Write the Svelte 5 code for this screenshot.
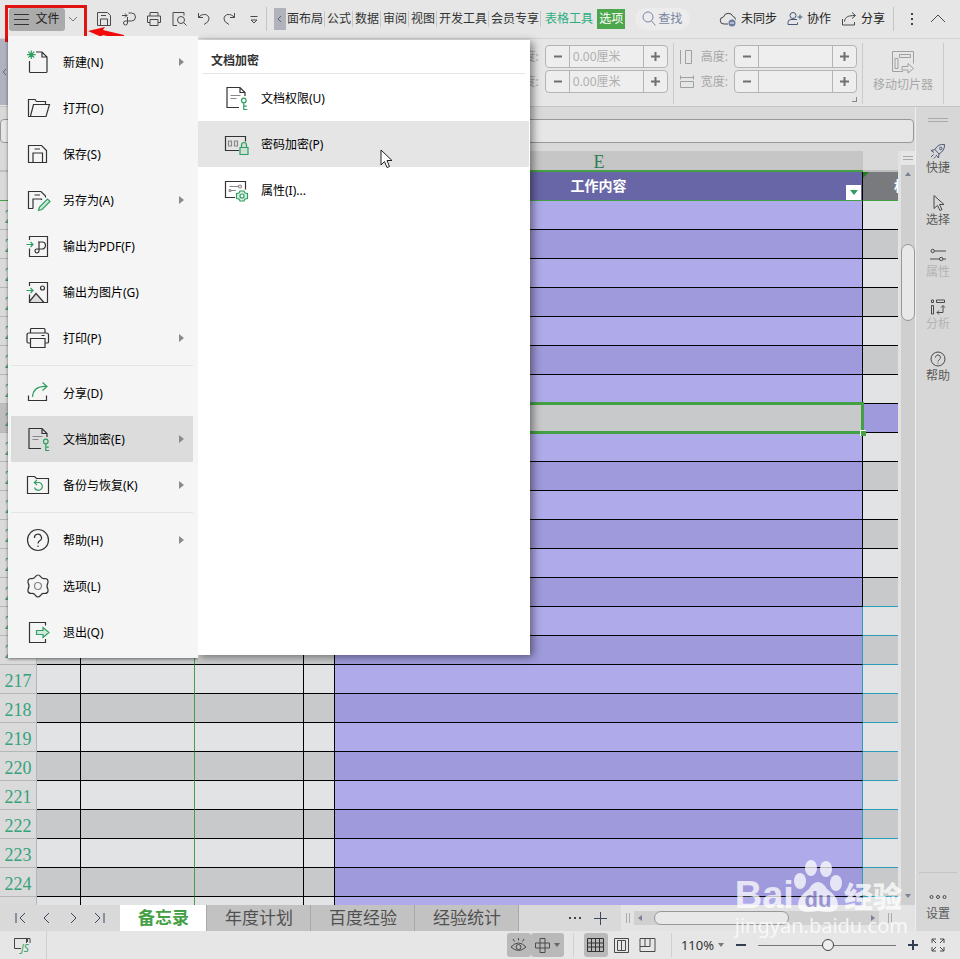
<script lang="ts">
	const dark = '#333';
	const green = '#2f9e62';
	const grey = '#888';

	// Every icon is a list of [path, stroke, fill] on a 24x24 grid
	const page = 'M15 21.5H3v-20h13l5 5V10M16 1.5v5h5';
	const key = 'M17.5 14.5a2.3 2.3 0 1 0 4.6 0a2.3 2.3 0 1 0-4.6 0M19.8 17v6.5h3.5M19.8 20.2h3';
	const icons = {
		new: [
			['M3.5 11v10.500q0 1 1 1h15.500q1 0 1-1V7l-5-5h-6M16 2v5h5', dark],
			['M5.300 .5v8.500M1 4.700h8.600M2.300 1.700l6 6M8.300 1.700l-6 6', green]
		],
		open: [['M19.500 8.500V5.500H10.500L9 3.500H2.500v17h17.500L23.500 8.500H7.500L4.500 20', dark]],
		save: [['M2.500 3.500h13l5 5v12h-18zM7 20.500v-9.500h9.500v9.500M8.500 7h5.500', dark]],
		saveAs: [
			['M7 20.500H2.500v-17h12.500l4.500 4.500v1.500M7 20.500v-9.500h8.500v1M8.500 7h5.500', dark],
			['M12.500 22.500l1-3.500 8-8 2.500 2.500-8 8z', green, '#cfe9da']
		],
		pdf: [
			['M3.500 6v-3.500h18v20h-18v-8M12 8h4a3.500 3.500 0 0 1 0 7h-5.500a2 2 0 1 0 2.500 2v-9', dark],
			['M.5 10.500h6.500M4.500 8l2.500 2.500-2.500 2.500', green]
		],
		image: [
			['M3.500 21.500l6.500-8 8 9h-14z', dark, '#ddd'],
			['M3.500 6v-3.500h18v20h-18v-8M14.500 8a2 2 0 1 0 4 0a2 2 0 1 0-4 0', dark],
			['M.5 10.500h6.500M4.500 8l2.500 2.500-2.500 2.500', green]
		],
		print: [
			['M4.500 7V3.500q0-1 1-1h12.500q1 0 1 1V7M4.500 17H2.500q-1 0-1.500-1V9q0-2 2-2h17.500q2 0 2 2v7q0 1-1 1H19M4.500 12.500H19v9H4.500zM15.500 9.500h3', dark]
		],
		share: [
			['M2.500 14.500v5h18v-5', dark],
			['M6.500 16C7 9 11 5 20.500 5.500M16.500 1.500l4.500 4-4.500 4', green]
		],
		encrypt: [[page, dark], ['M6.500 9.500h10M6.500 12.500h6', grey], [key, green]],
		backup: [
			['M1.500 19.500V3.500h7l2 2h12v15h-21z', dark],
			['M8.500 9.500h5a4 4 0 1 1-5 5M11 6.800L8.300 9.500l2.700 2.500', green]
		],
		help: [['M1.500 12a10.500 10.500 0 1 0 21 0a10.500 10.500 0 1 0-21 0M8.500 10a3.500 3.500 0 1 1 5.500 2.500q-2 1.200-2 3M12 17.500v1.500', dark]],
		gear: [
			['M9.500 2.500Q12-.5 14.500 2.500Q16 5 18.500 4.500Q22.500 4.500 22 8.500Q20 12 22 15.500Q22.500 19.500 18.500 19.500Q16 19 14.500 21.500Q12 24.500 9.500 21.500Q8 19 5.500 19.500Q1.500 19.500 2 15.500Q4 12 2 8.500Q1.500 4.500 5.500 4.500Q8 5 9.500 2.500z', dark],
			['M8.500 12a3.500 3.500 0 1 0 7 0a3.500 3.500 0 1 0-7 0', grey]
		],
		exit: [
			['M19.500 5.500V2.500h-16v20h16V19', dark],
			['M10.500 10.500h6.500v-3l6 5-6 5v-3h-6.500z', green, '#cfe9da']
		],
		password: [
			['M15 18.500H1.500v-14h20v5', dark],
			['M4.500 9h3v5h-3zM10.500 9h3v5h-3z', grey],
			['M16 15.500h8v7h-8zM17.500 15.500v-2.500a2.500 2.500 0 0 1 5 0v2.500', green, '#cfe0d5']
		],
		property: [
			['M11 19.500H1.500v-16h20v8', dark],
			['M5.500 8.500h9M14.500 8.500a1.500 1.500 0 1 0 3 0a1.500 1.500 0 1 0-3 0M5 12.500a1 1 0 1 0 2 0a1 1 0 1 0-2 0M7 12.500h5', grey],
			['M16 13h4l1 2 2.500.5v5l-2.500.5-1 2h-4l-1-2-2.500-.5v-5l2.500-.5zM16 18a2 2 0 1 0 4 0a2 2 0 1 0-4 0', green, '#d8eee1']
		]
	};

	const menu = [
		[
			{ label: '新建(N)', icon: 'new', more: true },
			{ label: '打开(O)', icon: 'open' },
			{ label: '保存(S)', icon: 'save' },
			{ label: '另存为(A)', icon: 'saveAs', more: true },
			{ label: '输出为PDF(F)', icon: 'pdf' },
			{ label: '输出为图片(G)', icon: 'image' },
			{ label: '打印(P)', icon: 'print', more: true }
		],
		[
			{ label: '分享(D)', icon: 'share' },
			{ label: '文档加密(E)', icon: 'encrypt', more: true },
			{ label: '备份与恢复(K)', icon: 'backup', more: true }
		],
		[
			{ label: '帮助(H)', icon: 'help', more: true },
			{ label: '选项(L)', icon: 'gear' },
			{ label: '退出(Q)', icon: 'exit' }
		]
	];
	const submenu = [
		{ label: '文档权限(U)', icon: 'encrypt' },
		{ label: '密码加密(P)', icon: 'password' },
		{ label: '属性(I)...', icon: 'property' }
	];

	const quick = [
		{ name: '保存', d: 'M1.500 1.500h10l3 3v10h-13zM4.500 14.500v-6.500h7v6.500M5 4.500h5' },
		{ name: '输出为PDF', d: 'M1 4.500h5M4 2.500l2 2-2 2M7.500 2h3a4 4 0 0 1 0 8h-6a2 2 0 1 0 2 2V6' },
		{ name: '打印', d: 'M4 5V1.500h8V5M4 11.500H1.500V5h13v6.500H12M4 8.500h8v6H4z' },
		{ name: '打印预览', d: 'M6 14.500H2v-13h11v3M6.500 9a3.500 3.500 0 1 0 7 0a3.500 3.500 0 1 0-7 0M12.500 11.500l3 3' },
		{ name: '撤销', d: 'M2.500 2v4.500h4.500M2.500 6.500C6 2 13 2.500 13 8q0 3-5 5.500' },
		{ name: '恢复', d: 'M13.500 2v4.500H9M13.500 6.500C10 2 3 2.500 3 8q0 3 5 5.500' },
		{ name: '更多', d: 'M4.500 5.500h7M5 9l3 3 3-3z' }
	];
	const tabs = ['面布局', '公式', '数据', '审阅', '视图', '开发工具', '会员专享'];

	const side = [
		{ label: '快捷', d: 'M15.500 2.500Q9 1.500 6 7.500L10 12Q16 8.500 15.500 2.500zM10.500 6.500a1.300 1.300 0 1 0 2.600 0a1.300 1.300 0 1 0-2.600 0M6 7.500L2 8.500l3 2M10 12l-.5 4-2.500-3M4.500 12.500L2 15M6.500 14.500L5 16.500', color: '#4a5878' },
		{ label: '选择', d: 'M5 1.500v13l3.500-3 2.500 5 2-1-2.500-5h4.500z' },
		{ label: '属性', d: 'M2 5a1.700 1.700 0 1 0 3.400 0a1.700 1.700 0 1 0-3.400 0M5.500 5H17M10.500 13a1.700 1.700 0 1 0 3.400 0a1.700 1.700 0 1 0-3.400 0M1 13h9.500M14 13h3', off: true },
		{ label: '分析', d: 'M2.500 2h2v2.500h-2zM7.500 2h8v2.500h-8zM2.500 7.500h2v8.500h-2zM8 14.500h6V8M10 12.500l-2 2 2 2M12 9.500l2-2 2 2', off: true },
		{ label: '帮助', d: 'M2 9a7 7 0 1 0 14 0a7 7 0 1 0-14 0M6.500 7.500a2.500 2.500 0 1 1 4 2q-1.500 1-1.500 2M9 12.700v1' }
	];

	const rows = Array.from({ length: 24 }, (_, i) => 201 + i);
	const nav = [
		{ name: '第一张', d: 'M3 3v10M12 3L7 8l5 5' },
		{ name: '上一张', d: 'M10 3L5 8l5 5' },
		{ name: '下一张', d: 'M6 3l5 5-5 5' },
		{ name: '最后一张', d: 'M4 3l5 5-5 5M13 3v10' }
	];
	const sheets = ['备忘录', '年度计划', '百度经验', '经验统计'];

	let openItem = $state('文档加密(E)');
	let hovered = $state('密码加密(P)');
	let activeSheet = $state('备忘录');
	let zoom = $state(51);
</script>

{#snippet line(d, size = 16, color = '#4a4a4a')}
	<svg width={size} height={size} viewBox="0 0 {size} {size}" fill="none" stroke={color}><path {d} /></svg>
{/snippet}

{#snippet menuIcon(name)}
	<svg width="24" height="24" viewBox="0 0 24 24" stroke-width="1.2">
		{#each icons[name] as [d, stroke, fill]}
			<path {d} {stroke} fill={fill ?? 'none'} />
		{/each}
	</svg>
{/snippet}

{#snippet spinner(label, value)}
	<div class="spinner">
		<button aria-label="减小{label}">{@render line('M2 5.500h8', 11, '#707070')}</button>
		<input type="text" aria-label={label} {value} />
		<button aria-label="增大{label}">{@render line('M1 5.500h9M5.500 1v9', 11, '#707070')}</button>
	</div>
{/snippet}

<div class="app">
	<header class="topbar">
		<button class="file-button">
			{@render line('M0 3.500h15M0 8.500h15M0 13.500h15', 16, '#333')}文件
		</button>
		<button class="file-more" aria-label="文件菜单">{@render line('M1 3l4 4 4-4', 10, '#777')}</button>
		<div class="quick">
			{#each quick as item}
				<button aria-label={item.name}>{@render line(item.d)}</button>
			{/each}
		</div>
		<span class="rule"></span>
		<button class="tab-scroll" aria-label="向左滚动">{@render line('M5 1L2 4l3 3', 8, '#666')}</button>
		<nav class="tabs">
			{#each tabs as tab}
				<a href="#tab">{tab}</a>
			{/each}
		</nav>
		<a class="tool-tab" href="#table">表格工具</a>
		<a class="tool-tab option" href="#option">选项</a>
		<button class="search">{@render line('M2 6a5 5 0 1 0 10 0a5 5 0 1 0-10 0M10.500 10l4 4.500', 16, '#7a86a8')}查找</button>
		<div class="account">
			<button>
				<svg width="18" height="16" viewBox="0 0 18 16" fill="none" stroke="#444">
					<path d="M9 13H5a3.500 3.500 0 0 1-.5-7A5 5 0 0 1 14 5.500q2.500.5 2.500 3" />
					<circle cx="13" cy="12" r="3.500" fill="#6c7ba0" stroke="none" />
					<path d="M11 12h4" stroke="#fff" />
				</svg>未同步
			</button>
			<button>{@render line('M3 4.500a3 3 0 1 0 6 0a3 3 0 1 0-6 0M10 8.500H4q-3 0-3 3v2h9.500v-2M10.500 6h5M13 3.500v5', 16, '#4a5878')}协作</button>
			<button>{@render line('M1.500 8v6h12v-3M3.500 10.500C4 6 7 4.500 14 4.500M11 1.500l3.500 3-3.500 3')}分享</button>
		</div>
		<span class="rule"></span>
		<button class="dots" aria-label="更多">
			<svg width="4" height="14" viewBox="0 0 4 14" fill="#444"><path d="M1 1h2v2H1zM1 6h2v2H1zM1 11h2v2H1z" /></svg>
		</button>
		<button class="collapse" aria-label="收起功能区">{@render line('M1 11l7-7 7 7')}</button>

		<!-- red callout round the file button -->
		<div class="callout"></div>
		<svg class="callout-arrow" width="36" height="12" viewBox="0 0 36 12" fill="#f00c0c">
			<path d="M0 4L17 0l-2 3L36 8v4L14 8l2 3z" />
		</svg>
	</header>

	<section class="ribbon">
		<button class="ribbon-scroll" aria-label="向左滚动">{@render line('M6 1L3 4l3 3', 8, '#666')}</button>
		<div class="size-group">
			<div class="size-row"><span>高度:</span>{@render spinner('按钮高度', '0.00厘米')}</div>
			<div class="size-row"><span>宽度:</span>{@render spinner('按钮宽度', '0.00厘米')}</div>
		</div>
		<div class="size-group">
			<div class="size-row">{@render line('M1.500 1v14M6.500 1.500h6v13h-6z', 16, '#a0a0a0')}<span>高度:</span>{@render spinner('高度', '')}</div>
			<div class="size-row">{@render line('M1.500 3.500h13M1.500 1.500v4M14.500 1.500v4M1.500 7.500h13v6h-13z', 16, '#a0a0a0')}<span>宽度:</span>{@render spinner('宽度', '')}</div>
			<button class="launcher" aria-label="更多设置"></button>
		</div>
		<button class="slicer">
			<svg width="24" height="24" viewBox="0 0 24 24" fill="none" stroke="#a0a0a0">
				<path d="M12 21.500H1.500v-20h21v12M8.500 4.500h11v3h-11zM4 8.500h3v10H4zM11 16.500h6v-3l5.500 5-5.500 4.500v-3h-6z" />
			</svg>
			移动切片器
		</button>
	</section>

	<main>
		<div class="work">
			<div class="formula"><input type="text" aria-label="编辑栏" /></div>
			<div class="sheet">
				<table>
					<colgroup>
						<col class="w-num" /><col class="w-a" /><col class="w-b" /><col class="w-c" /><col class="w-d" /><col /><col class="w-f" />
					</colgroup>
					<thead>
						<tr class="letters">
							<th></th><th></th><th></th><th></th><th></th>
							<th class="letter-e">E</th>
							<th></th>
						</tr>
						<tr class="titles">
							<th></th><th></th><th></th><th></th><th></th>
							<th class="title-e">
								工作内容
								<button class="filter" aria-label="筛选">
									<svg width="8" height="5" viewBox="0 0 8 5" fill="#2f9e62"><path d="M0 0h8L4 5z" /></svg>
								</button>
							</th>
							<th class="title-f">相关</th>
						</tr>
					</thead>
					<tbody>
						{#each rows as row, i}
							<tr class:current={row === 208}>
								<th class="num">{row}</th>
								<td></td>
								<td class="freeze"></td>
								<td></td>
								<td></td>
								<td class="e" class:selected={row === 208} class:cyan-side={i > 13}></td>
								<td class="f" class:cyan-line={i > 12}></td>
							</tr>
						{/each}
						<tr class="partial">
							<th class="num"></th>
							<td></td>
							<td class="freeze"></td>
							<td></td>
							<td></td>
							<td class="e cyan-side"></td>
							<td class="f"></td>
						</tr>
					</tbody>
				</table>
				<div class="vscroll">
					<div class="split"></div>
					<button aria-label="向上滚动"><svg width="6" height="4" viewBox="0 0 6 4" fill="#7c8296"><path d="M0 4h6L3 0z" /></svg></button>
					<div class="vtrack"><div class="vthumb"></div></div>
					<button aria-label="向下滚动"><svg width="6" height="4" viewBox="0 0 6 4" fill="#7c8296"><path d="M0 0h6L3 4z" /></svg></button>
				</div>
			</div>
			<div class="sheet-bar">
				<div class="nav">
					{#each nav as item}
						<button aria-label={item.name}>{@render line(item.d, 16, '#3f4660')}</button>
					{/each}
				</div>
				{#each sheets as sheet}
					<button class="sheet-tab" class:active={sheet === activeSheet} onclick={() => (activeSheet = sheet)}>{sheet}</button>
				{/each}
				<div class="sheet-extra">
					<button aria-label="更多工作表">
						<svg width="14" height="4" viewBox="0 0 14 4" fill="#444"><path d="M1 1h2v2H1zM6 1h2v2H6zM11 1h2v2h-2z" /></svg>
					</button>
					<button aria-label="新建工作表">{@render line('M1 7.500h13M7.500 1v13', 15, '#3f4660')}</button>
				</div>
				<div class="hscroll">
					<span class="grip"></span>
					<div class="htrack">
						<button aria-label="向左滚动"><svg width="4" height="6" viewBox="0 0 4 6" fill="#7c8296"><path d="M4 0v6L0 3z" /></svg></button>
						<div class="hthumb"></div>
						<button aria-label="向右滚动"><svg width="4" height="6" viewBox="0 0 4 6" fill="#7c8296"><path d="M0 0v6l4-3z" /></svg></button>
					</div>
					<span class="grip"></span>
				</div>
			</div>
		</div>
		<aside>
			<span class="handle"></span>
			{#each side as item}
				<button class:off={item.off}>{@render line(item.d, 18, item.color)}{item.label}</button>
			{/each}
			<div class="settings">
				<button>{@render line('M1 9a1.500 1.500 0 1 0 3 0a1.500 1.500 0 1 0-3 0M7.500 9a1.500 1.500 0 1 0 3 0a1.500 1.500 0 1 0-3 0M14 9a1.500 1.500 0 1 0 3 0a1.500 1.500 0 1 0-3 0', 18)}设置</button>
			</div>
		</aside>
	</main>

	<footer>
		<button class="script" aria-label="JS宏">
			<svg width="18" height="18" viewBox="0 0 18 18" fill="none" stroke="#444">
				<path d="M7 12.500H.5v-10h13V6M12.500 7V2.500h3.500V7" />
				<text x="7" y="16" font-size="10" font-style="italic" fill="#2f9e62" stroke="none">JS</text>
			</svg>
		</button>
		<div class="toggles">
			<button aria-label="护眼模式">{@render line('M1 10q7.500-8 15 0q-7.500 7-15 0zM6 10a2.500 2.500 0 1 0 5 0a2.500 2.500 0 1 0-5 0M8.500 1v2.500M3 2l1.500 2.500M14 2l-1.500 2.500', 17)}</button>
			<button class="wide" aria-label="阅读模式">
				{@render line('M6 1.500h5v14H6zM1.500 6h14v5h-14z', 17)}
				<svg width="6" height="4" viewBox="0 0 6 4" fill="#666"><path d="M0 0h6L3 4z" /></svg>
			</button>
		</div>
		<div class="views">
			<button class="on" aria-label="普通视图">{@render line('M.5 1.500h16v13H.5zM.5 6h16M.5 10h16M4.500 1.500v13M8.500 1.500v13M12.500 1.500v13', 17, '#333')}</button>
			<button aria-label="页面布局">{@render line('M1.500 1.500h14v14h-14zM4.500 3.500h4v10h-4zM8.500 3.500h4v10h-4z', 17)}</button>
			<button aria-label="分页预览">{@render line('M1 1.500h15v13H1zM6 1.500v8M11 1.500v8M1 9.500h10', 17)}</button>
		</div>
		<div class="zoom">
			<button class="percent">110%<svg width="6" height="4" viewBox="0 0 6 4" fill="#777"><path d="M0 0h6L3 4z" /></svg></button>
			<button class="bold-sign" aria-label="缩小">{@render line('M1 6h10', 12, '#333e55')}</button>
			<input type="range" min="0" max="100" aria-label="缩放" bind:value={zoom} />
			<button class="bold-sign" aria-label="放大">{@render line('M1 6h10M6 1v10', 12, '#333e55')}</button>
			<button aria-label="全屏">{@render line('M2 6V2h4M2 2l4 4M10 2h4v4M14 2l-4 4M2 10v4h4M2 14l4-4M14 10v4h-4M14 14l-4-4')}</button>
		</div>
	</footer>

	<div class="watermark">
		<div class="brand">
			<b>Bai</b>
			<svg width="48" height="56" viewBox="0 0 48 56" fill="#fff">
				<ellipse cx="6" cy="22" rx="6" ry="8" />
				<ellipse cx="17" cy="9" rx="6" ry="8" />
				<ellipse cx="32" cy="10" rx="6" ry="8" />
				<ellipse cx="42" cy="24" rx="6" ry="8" />
				<path d="M24 23q5 0 9 7q11 8 11 15q0 8-9 8q-6 0-11-1q-5 1-11 1q-9 0-9-8q0-7 11-15q4-7 9-7z" />
				<text x="24" y="48" text-anchor="middle" font-size="22" font-weight="bold" fill="#8f8bc8">du</text>
			</svg>
			<b class="cn">经验</b>
		</div>
		<span>jingyan.baidu.com</span>
	</div>

	<div class="submenu">
		<h2>文档加密</h2>
		{#each submenu as item}
			<button class:hovered={item.label === hovered} onmouseenter={() => (hovered = item.label)}>
				{@render menuIcon(item.icon)}<span>{item.label}</span>
			</button>
		{/each}
	</div>
	<div class="menu">
		{#each menu as group, i}
			{#if i > 0}<hr />{/if}
			{#each group as item}
				<button class:open={item.label === openItem} onclick={() => (openItem = item.label)}>
					{@render menuIcon(item.icon)}<span>{item.label}</span>
					{#if item.more}
						<svg width="5" height="8" viewBox="0 0 5 8" fill="#8a8a8a"><path d="M0 0v8l5-4z" /></svg>
					{/if}
				</button>
			{/each}
		{/each}
	</div>
	<svg class="pointer" width="13" height="20" viewBox="0 0 13 20" fill="#fff" stroke="#222">
		<path d="M1 1v15l3.500-3.500L7 18.500l2.500-1L7 11.500h5z" />
	</svg>
</div>

<style>
	:global(body) {
		margin: 0;
	}

	.app {
		position: relative;
		overflow: hidden;
		background: #e6e6e6;
		color: #333;
		font-family: 'Noto Sans', 'Noto Sans CJK SC', sans-serif;
		font-size: 12px;
		line-height: 16px;
	}

	button,
	input {
		font: inherit;
		color: inherit;
		box-sizing: border-box;
	}

	button {
		display: flex;
		align-items: center;
		justify-content: center;
		padding: 0;
		border: 0;
		background: none;
		white-space: nowrap;
	}

	svg {
		flex: none;
		overflow: visible;
	}

	a {
		color: inherit;
		text-decoration: none;
		white-space: nowrap;
	}

	/* Title bar */

	.topbar {
		position: relative;
		display: flex;
		align-items: center;
		height: 38px;
		padding-left: 9px;
		border-bottom: 1px solid #d2d2d2;
	}

	.file-button {
		width: 56px;
		height: 23px;
		gap: 5px;
		background: #ababab;
		border-radius: 3px;
		color: #222;
	}

	.file-more {
		width: 16px;
		height: 23px;
		margin-right: 10px;
	}

	.quick {
		display: flex;
	}

	.quick button {
		width: 25px;
		height: 24px;
	}

	.rule {
		width: 1px;
		height: 24px;
		background: #c4c4c4;
	}

	.tab-scroll {
		width: 12px;
		height: 22px;
		margin-left: 7px;
		background: #b0b3bb;
	}

	.tabs {
		display: flex;
	}

	.tabs a {
		padding: 0 1px 0 2px;
		border-right: 1px solid #c8c8c8;
	}

	.tabs a:first-child {
		padding-left: 1px;
	}

	.tool-tab {
		margin-left: 4px;
		color: #2fae80;
	}

	.option {
		padding: 2px;
		background: #4ca64c;
		color: #fff;
	}

	.search {
		gap: 1px;
		margin-left: 10px;
		padding: 3px 8px 3px 6px;
		border-radius: 12px;
		background: #ececec;
		color: #7a84a0;
	}

	.account {
		display: flex;
		gap: 10px;
		margin: 0 8px 0 auto;
		color: #222;
	}

	.account button {
		gap: 4px;
	}

	.dots {
		width: 35px;
	}

	.collapse {
		width: 18px;
		margin-right: 13px;
	}

	.callout {
		position: absolute;
		left: 5px;
		top: 5px;
		width: 76px;
		height: 31px;
		border: 3px solid #e01212;
	}

	.callout-arrow {
		position: absolute;
		left: 88px;
		top: 27px;
	}

	/* Ribbon */

	.ribbon {
		display: flex;
		justify-content: flex-end;
		height: 61px;
		padding: 4px 16px 2px 0;
		border-bottom: 1px solid #c4c4c4;
		color: #a8a8a8;
	}

	.ribbon-scroll {
		width: 8px;
		height: 66px;
		margin: -4px auto 0 0;
		background: #b0b3bf;
	}

	.size-group {
		position: relative;
		display: flex;
		flex-direction: column;
		gap: 2px;
		padding: 2px 5px 0;
		border-right: 1px solid #cacaca;
	}

	.size-row {
		display: flex;
		align-items: center;
		gap: 6px;
	}

	.spinner {
		display: flex;
		width: 123px;
		height: 23px;
		box-sizing: border-box;
		border: 1px solid #b4b4b4;
		border-radius: 4px;
		background: #eee;
	}

	.spinner button {
		width: 23px;
		stroke-width: 2;
	}

	.spinner input {
		flex: 1;
		min-width: 0;
		padding: 0 3px;
		border: solid #b4b4b4;
		border-width: 0 1px;
		background: none;
		color: #b0b0b0;
	}

	.launcher {
		position: absolute;
		right: 5px;
		bottom: 2px;
		width: 5px;
		height: 5px;
		border: solid #888;
		border-width: 0 1px 1px 0;
	}

	.slicer {
		flex-direction: column;
		gap: 3px;
		padding: 0 10px 4px;
		border-right: 1px solid #cacaca;
	}

	/* Work area */

	main {
		display: flex;
	}

	.work {
		flex: 1;
		min-width: 0;
		background: #d9d9d9;
	}

	.formula {
		padding: 12px 1px 8px 0;
	}

	.formula input {
		display: block;
		width: 100%;
		height: 24px;
		border: 1px solid #979797;
		border-radius: 4px;
		background: #e6e6e6;
	}

	.sheet {
		display: flex;
	}

	table {
		flex: 1;
		width: 0;
		table-layout: fixed;
		border-spacing: 0;
	}

	.w-num {
		width: 37px;
	}

	.w-a {
		width: 44px;
	}

	.w-b {
		width: 114px;
	}

	.w-c {
		width: 109px;
	}

	.w-d {
		width: 31px;
	}

	.w-f {
		width: 35px;
	}

	th,
	td {
		box-sizing: border-box;
		height: 29px;
		padding: 0;
		border: solid #000;
		border-width: 0 1px 1px 0;
	}

	.letters th {
		height: 21px;
		border-width: 0 0 2px;
		border-color: #bdbdbd;
	}

	.letters .letter-e {
		padding-top: 3px;
		border-color: #44a044;
		background: #c6c6c6;
		color: #2f7d52;
		font: 18px 'Liberation Serif', serif;
		line-height: 16px;
	}

	.titles th {
		border-bottom-color: #44a044;
	}

	.titles .title-e {
		position: relative;
		background: #6866a6;
		color: #fff;
		font-size: 14px;
	}

	.filter {
		position: absolute;
		right: 1px;
		bottom: 0;
		width: 15px;
		height: 15px;
		background: #fff;
	}

	.titles .title-f {
		position: relative;
		overflow: hidden;
		padding-left: 31px;
		border-right: 0;
		background: #787a7e;
		color: #fff;
		font-size: 14px;
		text-align: left;
		white-space: nowrap;
	}

	.title-f::before {
		content: '';
		position: absolute;
		left: 0;
		top: 0;
		width: 6px;
		height: 6px;
		background: #1e7d1e;
		clip-path: polygon(0 0, 100% 0, 0 100%);
	}

	tbody tr {
		background: #e2e3e5;
	}

	tbody tr:nth-child(even) {
		background: #c8c9ca;
	}

	.num {
		padding-top: 4px;
		border-color: #b4b6b8;
		background: #dadada;
		color: #36a37c;
		font: 18px 'Liberation Serif', serif;
		line-height: 18px;
	}

	.current .num {
		background: #bebebe;
	}

	.freeze {
		border-right-color: #44a044;
	}

	.e,
	.current .f {
		background: #afabea;
	}

	tr:nth-child(even) .e,
	.current .f {
		background: #9e9adb;
	}

	.f {
		border-right: 0;
	}

	.e.cyan-side {
		border-right-color: #2a9db8;
	}

	.cyan-line {
		border-bottom-color: #2a9db8;
	}

	tr .e.selected {
		position: relative;
		background: #c8c9ca;
	}

	.selected::before {
		content: '';
		position: absolute;
		inset: -2px;
		border: 3px solid #44a044;
	}

	.selected::after {
		content: '';
		position: absolute;
		right: -4px;
		bottom: -4px;
		width: 5px;
		height: 5px;
		border: solid #fff;
		border-width: 1px 0 0 1px;
		background: #44a044;
	}

	.partial td,
	.partial .num {
		height: 8px;
		padding: 0;
		border-bottom: 0;
		line-height: 0;
	}

	.vscroll {
		display: flex;
		flex-direction: column;
		width: 14px;
		border-left: 3px solid #e2e2e2;
		background: #cfcfcf;
	}

	.vscroll button {
		height: 18px;
	}

	.split {
		height: 14px;
		background:
			linear-gradient(#a8a8a8, #a8a8a8) 2px 5px / 10px 1px no-repeat,
			linear-gradient(#a8a8a8, #a8a8a8) 2px 8px / 10px 1px no-repeat,
			#e6e6e6;
	}

	.vtrack {
		flex: 1;
		padding-top: 61px;
	}

	.vthumb {
		width: 14px;
		height: 77px;
		box-sizing: border-box;
		border: 1px solid #979797;
		border-radius: 7px;
		background: #e8e8e8;
	}

	/* Sheet tabs */

	.sheet-bar {
		display: flex;
		height: 26px;
	}

	.nav {
		display: flex;
		gap: 10px;
		width: 107px;
		padding-left: 13px;
	}

	.sheet-tab {
		width: 104px;
		padding-left: 1px;
		border-right: 1px solid #a9a9a9;
		background: #c2c2c2;
		color: #505050;
		font-size: 17px;
	}

	.sheet-tab.active {
		width: 87px;
		background: #fff;
		color: #44a044;
		font-weight: bold;
	}

	.sheet-extra {
		display: flex;
		flex: 1;
		justify-content: flex-end;
		gap: 11px;
		padding-right: 13px;
	}

	.hscroll {
		display: flex;
		align-items: center;
		gap: 4px;
		width: 294px;
		padding-left: 5px;
		box-sizing: border-box;
		background: #e3e3e3;
	}

	.grip {
		width: 2px;
		height: 10px;
		border: solid #aaa;
		border-width: 0 1px;
	}

	.htrack {
		display: flex;
		align-items: center;
		width: 245px;
		height: 14px;
		margin-right: 5px;
		background: #d0d0d0;
	}

	.htrack button {
		width: 12px;
		height: 14px;
	}

	.hthumb {
		width: 135px;
		height: 14px;
		margin: 0 auto 0 8px;
		box-sizing: border-box;
		border: 1px solid #979797;
		border-radius: 7px;
		background: #e8e8e8;
	}

	/* Side pane */

	aside {
		display: flex;
		flex-direction: column;
		align-items: center;
		width: 44px;
		border-left: 1px solid #eee;
		background: #d7d7d7;
		color: #5a5a5a;
	}

	.handle {
		width: 20px;
		height: 2px;
		margin: 11px 0 20px;
		border: solid #aaa;
		border-width: 1px 0;
	}

	aside button {
		flex-direction: column;
		height: 34px;
		margin-bottom: 18px;
	}

	aside .off {
		color: #b4b4b4;
	}

	.settings {
		width: 38px;
		margin-top: auto;
		padding-top: 15px;
		border-top: 1px solid #c4c4c4;
	}

	.settings button {
		width: 100%;
		margin-bottom: 9px;
	}

	/* Status bar */

	footer {
		display: flex;
		align-items: center;
		height: 28px;
	}

	.script {
		width: 47px;
		height: 28px;
		border-right: 1px solid #d0d0d0;
	}

	.toggles {
		display: flex;
		margin-left: auto;
		padding-right: 9px;
		border-right: 1px solid #d0d0d0;
	}

	.toggles button {
		width: 24px;
		height: 24px;
		border-radius: 3px;
		background: #b9b9b9;
	}

	.toggles .wide {
		width: 33px;
		gap: 3px;
	}

	.views {
		display: flex;
		gap: 2px;
		padding: 0 11px 0 10px;
		border-right: 1px solid #d0d0d0;
	}

	.views button {
		width: 24px;
		height: 24px;
		border-radius: 3px;
	}

	.views .on {
		background: #b9b9b9;
	}

	.zoom {
		display: flex;
		align-items: center;
		gap: 11px;
		padding: 0 14px 0 9px;
	}

	.percent {
		gap: 4px;
		font-size: 13px;
	}

	.bold-sign {
		stroke-width: 2;
	}

	.zoom input {
		width: 138px;
		height: 14px;
		margin: 0;
		appearance: none;
		background: linear-gradient(#777, #777) center / 100% 1px no-repeat;
	}

	.zoom input::-webkit-slider-thumb {
		appearance: none;
		width: 12px;
		height: 12px;
		box-sizing: border-box;
		border: 1px solid #444;
		border-radius: 50%;
		background: #eee;
	}

	/* Watermark */

	.watermark {
		position: absolute;
		right: 52px;
		bottom: 22px;
		color: #fff;
		opacity: 0.75;
		pointer-events: none;
	}

	.brand {
		display: flex;
		align-items: flex-end;
		height: 58px;
		font: bold 38px 'Liberation Sans', sans-serif;
		line-height: 40px;
	}

	.brand .cn {
		margin-left: 2px;
		font-family: 'Noto Sans CJK SC', sans-serif;
		font-size: 29px;
	}

	.watermark span {
		display: block;
		font-size: 20px;
		line-height: 22px;
		text-align: right;
	}

	/* File menu */

	.menu {
		position: absolute;
		left: 8px;
		top: 36px;
		width: 190px;
		box-sizing: border-box;
		padding: 3px 5px 3px 3px;
		background: #f5f5f5;
		box-shadow: 0 1px 3px rgba(0, 0, 0, 0.5);
		clip-path: inset(0 0 -4px -4px);
		color: #000;
	}

	.menu button,
	.submenu button {
		width: 100%;
		height: 46px;
		gap: 13px;
		justify-content: flex-start;
	}

	.menu button {
		padding: 0 9px 0 15px;
	}

	.menu span,
	.submenu span {
		flex: 1;
		padding-top: 2px;
		text-align: left;
	}

	.menu .open {
		background: #dcdcdc;
	}

	.menu hr {
		margin: 4px 0;
		border: 0;
		border-top: 1px solid #e4e4e4;
	}

	.submenu {
		position: absolute;
		left: 197px;
		top: 40px;
		width: 333px;
		height: 615px;
		box-sizing: border-box;
		padding: 0 1px;
		background: #fff;
		box-shadow: 3px 2px 8px rgba(0, 0, 0, 0.45);
		color: #000;
	}

	.submenu h2 {
		margin: 0 4px 1px;
		padding: 13px 9px 4px;
		border-bottom: 1px solid #e6e6e6;
		color: #333;
		font-size: 12px;
	}

	.submenu button {
		padding-left: 26px;
	}

	.submenu .hovered {
		background: #e5e5e5;
	}

	.pointer {
		position: absolute;
		left: 380px;
		top: 149px;
	}
</style>
